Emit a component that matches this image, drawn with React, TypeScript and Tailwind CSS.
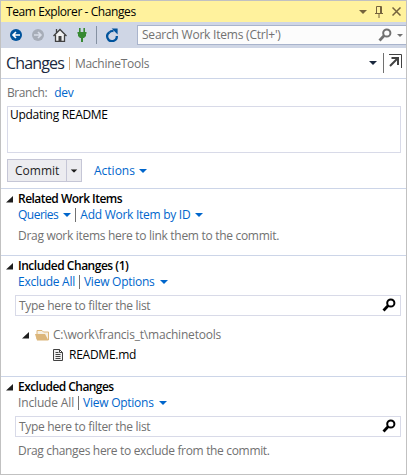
import type { ReactNode } from "react";

function Caret({ className }: { className: string }) {
  return (
    <svg className={`shrink-0 ${className}`} width="8" height="4" viewBox="0 0 8 4" fill="currentColor">
      <path d="M0 0h8L4 4z" />
    </svg>
  );
}

function Search({ className }: { className: string }) {
  return (
    <svg className={`shrink-0 ${className}`} width="14" height="14" viewBox="0 0 14 14" fill="none" stroke="currentColor">
      <circle cx="8.8" cy="5" r="3.6" strokeWidth="2" />
      <path d="M6.2 7.6L1.5 12.4" strokeWidth="2.8" />
    </svg>
  );
}

function Expander({ className }: { className: string }) {
  return (
    <svg className={`shrink-0 ${className}`} width="7" height="7" viewBox="0 0 7 7" fill="#1e1e1e">
      <path d="M7 0v6.5H0z" />
    </svg>
  );
}

function Section({ title, titleClass, children }: { title: string; titleClass: string; children: ReactNode }) {
  return (
    <section className="border-t border-[#ccd5e8] pt-[2px]">
      <div className="flex h-4 items-center">
        <Expander className="ml-[5px] mr-[5px]" />
        <h2 className={`font-semibold text-black ${titleClass}`}>{title}</h2>
      </div>
      {children}
    </section>
  );
}

function Filter() {
  return (
    <div className="ml-[14px] mr-[5px] mt-[5px] flex h-[21px] items-center justify-between border border-[#d8dae8] pl-[3px] pr-1 text-[#717171]">
      <span className="tracking-[-0.31px]">Type here to filter the list</span>
      <Search className="mb-px text-black" />
    </div>
  );
}

export default function App() {
  return (
    <div className="flex h-[475px] w-[407px] flex-col overflow-hidden whitespace-nowrap border border-[#c1c1c1] bg-white font-['Open_Sans','Noto_Sans',sans-serif] text-[12px] leading-4 text-[#717171]">
      <header className="flex h-[21px] shrink-0 items-center bg-[#fff29d] pl-[5px] text-black">
        <span className="tracking-[-0.42px]">Team Explorer - Changes</span>
        <Caret className="ml-auto mr-[8px] text-[#75633d]" />
        <svg className="mr-[9px]" width="8" height="12" viewBox="0 0 8 12" fill="none" stroke="#75633d">
          <path d="M1.5 7V.5h5V7M0 7.5h8M4 8v4M5.5 1v6" />
        </svg>
        <svg className="mr-[5px]" width="9" height="9" viewBox="0 0 9 9" stroke="#75633d" strokeWidth="1.5">
          <path d="M.5.5l8 8M8.5.5l-8 8" />
        </svg>
      </header>

      <div className="flex h-[26px] shrink-0 items-center bg-[#cfd6e5] pl-[9px]">
        <svg width="12" height="12" viewBox="0 0 12 12">
          <circle cx="6" cy="6" r="6" fill="#00539c" />
          <path d="M10 6H3M6 3L3 6l3 3" fill="none" stroke="#fff" strokeWidth="1.6" />
        </svg>
        <svg className="ml-[10px]" width="12" height="12" viewBox="0 0 12 12">
          <circle cx="6" cy="6" r="6" fill="#a7adb8" />
          <path d="M2 6h7M6 3l3 3-3 3" fill="none" stroke="#d8dde8" strokeWidth="1.6" />
        </svg>
        <svg className="ml-[9px]" width="14" height="14" viewBox="0 0 14 14">
          <path d="M2.5 7v6.5h9V7L7 2.5z" fill="#f0f0f0" />
          <path d="M.5 8L7 1.5 13.5 8M2.5 7v6.3h9V7M3.5 4.5V1" fill="none" stroke="#424242" strokeWidth="1.3" />
          <path d="M5.5 8h3v5.5h-3z" fill="#424242" />
        </svg>
        <svg className="ml-[10px]" width="10" height="14" viewBox="0 0 10 14" fill="#388a34">
          <path d="M2 0h1.6v4h2.8V0H8v4h1.5v1.7H9V8L7 10H6v4H4v-4H3L1 8V5.7H.5V4H2z" />
        </svg>
        <span className="ml-[9px] h-[18px] w-px bg-[#8591a2]" />
        <svg className="ml-[9px]" width="13" height="14" viewBox="0 0 13 14">
          <path d="M3.6 4.2A4.8 4.8 0 1 0 10.8 8" fill="none" stroke="#00539c" strokeWidth="2.3" />
          <path d="M3.6 4.2Q5 2.8 7.5 3.2" fill="none" stroke="#00539c" strokeWidth="2" />
          <path d="M5.6.6h6v6z" fill="#00539c" />
        </svg>
        <div className="ml-auto flex h-5 w-[269px] items-center border border-[#a9b4cc] border-r-0 bg-[#fcfcfc] pl-1">
          <span className="tracking-[-0.22px]">Search Work Items (Ctrl+&apos;)</span>
          <Search className="mb-px ml-auto mr-[5px] text-[#717171]" />
          <svg className="mr-[3px]" width="6" height="3" viewBox="0 0 6 3" fill="#717171"><path d="M0 0h6L3 3z" /></svg>
        </div>
      </div>

      <div className="flex h-[31px] shrink-0 items-center border-b border-[#ccd5e8] pl-[5px]">
        <h1 className="text-[16px] leading-5 tracking-[-0.85px] text-[#1b293e]">Changes</h1>
        <span className="ml-[5px] mr-[5px] h-[13px] w-px bg-[#d9ad7b]" />
        <span className="pt-px tracking-[-0.27px]">MachineTools</span>
        <Caret className="ml-auto mr-[6px] text-[#1b293e]" />
        <span className="mr-[5px] h-5 w-px bg-[#717171]" />
        <svg className="mr-1 mb-[5px]" width="13" height="14" viewBox="0 0 13 14" fill="none" stroke="#424242">
          <path d="M0 .5h12.5V14" />
          <path d="M1 12L9 4M2.5 4H9v7" strokeWidth="2" />
        </svg>
      </div>

      <div className="flex h-[27px] shrink-0 items-center pl-[6px]">
        <span className="tracking-[-0.4px]">Branch:</span>
        <a className="ml-[7px] tracking-[-0.3px] text-[#0066cc]">dev</a>
      </div>
      <div className="ml-[6px] mr-[5px] h-[47px] shrink-0 border border-[#d8dae8] pl-[2px] text-black">
        <span className="tracking-[-0.3px]">Updating README</span>
      </div>
      <div className="flex h-[35px] shrink-0 items-center pl-[6px]">
        <div className="flex h-[23px] w-[75px] items-center border border-[#c5c6d6] bg-[#ececf0] text-[#1e1e1e]">
          <span className="w-[58px] pl-[7px]">Commit</span>
          <span className="flex h-full flex-1 items-center justify-center border-l border-[#c5c6d6]">
            <Caret className="scale-[0.85]" />
          </span>
        </div>
        <a className="ml-3 text-[#0066cc]">Actions</a>
        <Caret className="ml-[4px] text-[#0066cc]" />
      </div>

      <Section title="Related Work Items" titleClass="tracking-[-0.53px]">
        <div className="flex h-4 items-center pl-[17px] text-[#0066cc]">
          <span className="tracking-[-0.5px]">Queries</span>
          <Caret className="ml-[5px]" />
          <span className="ml-1 mr-1 h-[14px] w-px bg-[#717171]" />
          <span className="tracking-[-0.27px]">Add Work Item by ID</span>
          <Caret className="ml-[5px]" />
        </div>
        <p className="mb-[11px] mt-[5px] pl-[17px] tracking-[-0.3px]">Drag work items here to link them to the commit.</p>
      </Section>

      <Section title="Included Changes (1)" titleClass="tracking-[-0.48px]">
        <div className="flex h-4 items-center pl-[17px] text-[#0066cc]">
          <span className="tracking-[-0.27px]">Exclude All</span>
          <span className="ml-1 mr-1 h-[14px] w-px bg-[#717171]" />
          <span className="tracking-[-0.25px]">View Options</span>
          <Caret className="ml-[5px]" />
        </div>
        <Filter />
        <div className="mt-[9px] flex h-[20px] items-center pl-[21px]">
          <Expander className="" />
          <svg className="ml-[6px]" width="14" height="12" viewBox="0 0 14 12">
            <path d="M2 10V1.5h5L8.5 3h5v8" fill="#f6f0e4" stroke="#dcb67a" />
            <path d="M0 5h10l3.5 6.5H2z" fill="#dcb67a" />
          </svg>
          <span className="ml-[4px] tracking-[-0.2px]">C:\work\francis_t\machinetools</span>
        </div>
        <div className="mb-[11px] flex h-[20px] items-center pl-[52px] text-black">
          <svg width="10" height="12" viewBox="0 0 10 12" fill="#f0f0f0" stroke="#424242">
            <path d="M.5.5h6l3 3v8h-9zM6.5.5v3h3M2.5 3.5h3M2.5 5.5h5M2.5 7.5h5M2.5 9.5h5" />
          </svg>
          <span className="ml-[6px] tracking-[-0.25px]">README.md</span>
        </div>
      </Section>

      <Section title="Excluded Changes" titleClass="tracking-[-0.55px]">
        <div className="flex h-4 items-center pl-[17px] text-[#0066cc]">
          <span className="tracking-[-0.15px] text-[#717171]">Include All</span>
          <span className="ml-1 mr-1 h-[14px] w-px bg-[#717171]" />
          <span className="tracking-[-0.25px]">View Options</span>
          <Caret className="ml-[5px]" />
        </div>
        <Filter />
        <p className="mt-[6px] pl-[17px] tracking-[-0.33px]">Drag changes here to exclude from the commit.</p>
      </Section>
    </div>
  );
}
